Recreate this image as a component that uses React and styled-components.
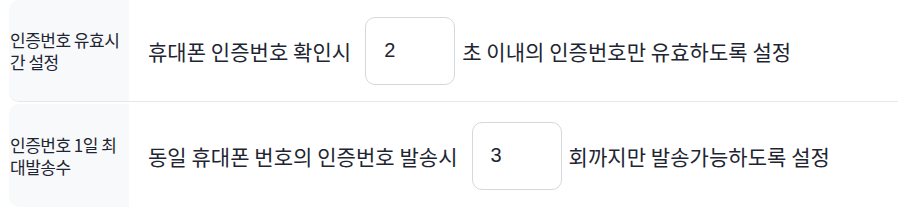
import styled, { createGlobalStyle } from "styled-components";

const rows = [
    { label: "인증번호 유효시간 설정", before: "휴대폰 인증번호 확인시", value: "2", after: "초 이내의 인증번호만 유효하도록 설정" },
    { label: "인증번호 1일 최대발송수", before: "동일 휴대폰 번호의 인증번호 발송시", value: "3", after: "회까지만 발송가능하도록 설정" },
];

export default function App(){
    return (
        <>
            <GlobalStyle />
            <Table>
                {rows.map((r, i) => (
                    <Row key={i} $last={i === rows.length - 1}>
                        <Label>{r.label}</Label>
                        <Content>
                            <span>{r.before}</span>
                            <Input defaultValue={r.value} />
                            <span>{r.after}</span>
                        </Content>
                    </Row>
                ))}
            </Table>
        </>
    );
}

const GlobalStyle = createGlobalStyle`
    body {
        margin: 0;
        background: #ffffff;
        font-family: "Noto Sans CJK KR", "Noto Sans", sans-serif;
        color: #1e2532;
    }
`;

const Table = styled.div`
    padding-left: 9px;
    display: flex;
    flex-direction: column;
    gap: 2px;
`;

const Row = styled.div`
    display: flex;
    height: ${p => p.$last ? "103px" : "101px"};
    border-bottom: ${p => p.$last ? "none" : "1px solid #e5e7eb"};
    border-radius: 10px 0 0 10px;
`;

const Label = styled.div`
    width: 120px;
    padding-left: 1px;
    padding-right: 2px;
    box-sizing: border-box;
    flex-shrink: 0;
    background: #f8f9fb;
    border-radius: 10px 0 0 10px;
    display: flex;
    align-items: center;
    font-size: 17px;
    line-height: 22px;
    letter-spacing: -0.5px;
    word-break: break-all;
`;

const Content = styled.div`
    display: flex;
    align-items: center;
    padding-left: 19px;
    font-size: 21px;
    letter-spacing: 0.05px;
    white-space: nowrap;
`;

const Input = styled.input`
    width: 90px;
    height: 68px;
    box-sizing: border-box;
    margin: 0 7px 0 14px;
    padding: 0 0 0 18px;
    border: 1px solid #d5d9df;
    border-radius: 10px;
    background: #ffffff;
    font-family: "Liberation Sans", "Noto Sans", sans-serif;
    font-size: 20px;
    color: #1e2532;
    outline: none;
`;
